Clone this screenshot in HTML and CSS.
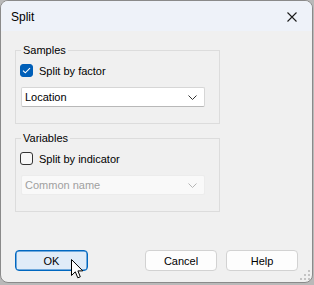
FILE: index.html
```html
<!DOCTYPE html>
<html lang="en">
<head>
  <meta charset="UTF-8">
  <title>Split</title>
  <link rel="stylesheet" href="styles.css">
</head>
<body>

  <div class="window">
    <div class="titlebar">
      <span class="title">Split</span>
      <svg class="close" width="10" height="10" viewBox="0 0 10 10">
        <path d="M0.5 0.5 L9.5 9.5 M9.5 0.5 L0.5 9.5" stroke="#1b1b1b" stroke-width="1.1" fill="none"/>
      </svg>
    </div>

    <div class="content">
      <fieldset class="group">
        <legend>Samples</legend>
        <label class="check-row">
          <span class="box checked">
            <svg width="9" height="7" viewBox="0 0 9 7">
              <path d="M1 3.6 L3.3 5.8 L8 1.2" stroke="#fff" stroke-width="1.1" fill="none"/>
            </svg>
          </span>
          Split by factor
        </label>
        <div class="combo">
          <span>Location</span>
          <svg width="9" height="5" viewBox="0 0 9 5">
            <path d="M0.5 0.5 L4.5 4.5 L8.5 0.5" stroke="#333" stroke-width="1" fill="none"/>
          </svg>
        </div>
      </fieldset>

      <fieldset class="group second">
        <legend>Variables</legend>
        <label class="check-row">
          <span class="box"></span>
          Split by indicator
        </label>
        <div class="combo disabled">
          <span>Common name</span>
          <svg width="9" height="5" viewBox="0 0 9 5">
            <path d="M0.5 0.5 L4.5 4.5 L8.5 0.5" stroke="#b5b5b5" stroke-width="1" fill="none"/>
          </svg>
        </div>
      </fieldset>

      <div class="buttons">
        <button class="btn default">OK</button>
        <button class="btn cancel">Cancel</button>
        <button class="btn help">Help</button>
      </div>
    </div>

    <!-- mouse pointer over the OK button -->
    <svg class="cursor" width="13" height="21" viewBox="0 0 13 21">
      <path d="M0.5 0.5 L0.5 16.5 L4.3 12.8 L6.8 18.8 L9.3 17.8 L6.9 11.9 L11.8 11.9 Z" fill="#fff" stroke="#000" stroke-width="1"/>
    </svg>

    <svg class="grip" width="10" height="10" viewBox="0 0 10 10">
      <rect x="8" y="0" width="2" height="2" fill="#c4c4c4"/>
      <rect x="4" y="4" width="2" height="2" fill="#c4c4c4"/>
      <rect x="8" y="4" width="2" height="2" fill="#c4c4c4"/>
      <rect x="0" y="8" width="2" height="2" fill="#c4c4c4"/>
      <rect x="4" y="8" width="2" height="2" fill="#c4c4c4"/>
      <rect x="8" y="8" width="2" height="2" fill="#c4c4c4"/>
    </svg>
  </div>

</body>
</html>
```

FILE: styles.css
```css
body {
  margin: 0;
  background-color: #b9b9b9;
  font-family: "Liberation Sans", Arial, sans-serif;
  font-size: 11px;
  color: #000;
}

.window {
  position: relative;
  width: 311px;
  height: 281px;
  border: 1px solid #8a8a8a;
  border-radius: 8px;
  background-color: #f0f0f0;
  overflow: hidden;
}

.titlebar {
  height: 30px;
  background-color: #eef2f9;
  display: flex;
  align-items: center;
  padding: 0 10px 0 10px;
}

.title {
  font-size: 12px;
  flex: 1;
  padding-top: 1px;
}

.close {
  margin-right: 5px;
  margin-top: 1px;
}

.content {
  padding: 12px 0 0 14px;
}

.group {
  width: 184px;
  margin: 0;
  padding: 0 14px 16px 4px;
  border: 1px solid #dcdcdc;
}

.group legend {
  padding: 0 2px;
  margin-left: 1px;
  line-height: 14px;
  font-size: 11px;
}

.group.second {
  margin-top: 7px;
}

.check-row {
  display: flex;
  align-items: center;
  height: 13px;
  margin-top: 7px;
  gap: 6px;
  font-size: 11px;
}

.box {
  width: 11px;
  height: 11px;
  border: 1px solid #333;
  border-radius: 3px;
  background-color: #f7f7f7;
  display: flex;
  align-items: center;
  justify-content: center;
}

.box.checked {
  background-color: #005fb8;
  border-color: #005fb8;
}

.combo {
  margin-top: 10px;
  margin-left: 1px;
  height: 18px;
  border: 1px solid #d6d6d6;
  border-bottom-color: #b8b8b8;
  border-radius: 2px;
  background-color: #fff;
  display: flex;
  align-items: center;
  justify-content: space-between;
  padding: 0 7px 0 3px;
  width: 172px;
  font-size: 11px;
}

.combo.disabled {
  background-color: #f9f9f9;
  border-color: #ececec;
  color: #a0a0a0;
}

.buttons {
  display: flex;
  margin-top: 38px;
  padding-right: 14px;
}

.btn {
  width: 72px;
  height: 21px;
  font-family: "Liberation Sans", Arial, sans-serif;
  font-size: 11px;
  color: #000;
  background-color: #fdfdfd;
  border: 1px solid #d2d2d2;
  border-radius: 4px;
  padding: 0;
}

.btn.default {
  width: 73px;
  background-color: #e0ecf8;
  border: 1px solid #0067c0;
  box-shadow: inset 0 0 0 0.5px #0067c0;
}

.btn.cancel {
  margin-left: auto;
}

.btn.help {
  margin-left: 9px;
}

.cursor {
  position: absolute;
  left: 70px;
  top: 258px;
}

.grip {
  position: absolute;
  right: 2px;
  bottom: 2px;
}
```
